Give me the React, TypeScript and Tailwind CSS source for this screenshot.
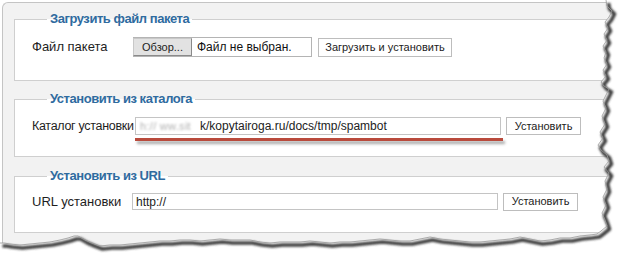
import React from "react";

const right: [number, number][] = [
  [606, 0], [607, 6], [612, 11], [609, 17], [605, 22], [608, 28], [604, 34], [607, 40],
  [603, 46], [606, 52], [604, 58], [607, 64], [603, 70], [606, 76], [601, 82], [604, 86],
  [609, 89], [606, 95], [603, 101], [606, 108], [602, 116], [605, 124], [600, 132],
  [603, 138], [598, 145], [601, 150], [607, 155], [609, 161], [604, 167], [609, 173],
  [605, 181], [607, 189], [603, 197], [606, 205], [602, 213], [605, 220], [607, 226],
  [601, 231], [597, 234],
];
const bottom: [number, number][] = [
  [590, 235], [580, 236], [570, 238], [560, 238], [550, 240], [540, 241], [530, 239],
  [520, 237], [510, 239], [500, 240], [490, 241], [480, 242], [470, 242], [460, 241],
  [450, 240], [440, 239], [430, 237], [420, 239], [410, 241], [400, 241], [390, 240],
  [380, 239], [370, 240], [360, 241], [350, 242], [340, 242], [330, 243], [320, 242],
  [310, 241], [300, 242], [290, 242], [280, 242], [270, 243], [260, 242], [250, 240],
  [240, 240], [230, 240], [220, 239], [210, 240], [200, 241], [190, 240], [180, 240],
  [170, 241], [160, 241], [150, 242], [140, 243], [130, 244], [120, 245], [110, 245],
  [100, 246], [92, 243], [85, 240], [78, 236], [74, 236], [68, 238], [60, 240],
  [50, 242], [40, 243], [30, 244], [20, 245], [10, 244], [4, 243], [0, 243],
];
const edge = [...right, ...bottom];
const edgeStr = edge.map((p) => p.join(",")).join(" ");
const fillStr = edgeStr + " 0,269 628,269 628,0";

function TornEdge() {
  return (
    <svg
      className="absolute left-0 top-0 pointer-events-none"
      width="628"
      height="269"
      viewBox="0 0 628 269"
    >
      <defs>
        <filter id="blr" x="-5%" y="-5%" width="110%" height="110%">
          <feGaussianBlur stdDeviation="0.9" />
        </filter>
      </defs>
      <polygon points={fillStr} fill="#ffffff" />
      <polyline
        points={edgeStr}
        transform="translate(2.5,3)"
        fill="none"
        stroke="#3f3f3f"
        strokeWidth="3.6"
        strokeLinejoin="round"
        filter="url(#blr)"
      />
      <polyline
        points={edgeStr}
        fill="none"
        stroke="#9a9a9a"
        strokeWidth="0.8"
      />
    </svg>
  );
}

const font = "font-['Liberation_Sans',Arial,sans-serif]";

function Legend({ children }: { children: React.ReactNode }) {
  return (
    <legend className="ml-[15px] px-[3px] text-[13px] leading-[16px] tracking-[-0.45px] font-bold text-[#2f6b9f]">
      {children}
    </legend>
  );
}

export default function App() {
  return (
    <div className={`relative w-[628px] h-[269px] overflow-hidden bg-white ${font}`}>
      <div className="absolute left-[2px] top-[2px] w-[640px] h-[260px] rounded-tl-[6px] border-t border-l border-[#c4c4c4] bg-[#f2f2f2]">
        {/* Fieldset 1 */}
        <fieldset className="mt-[8px] ml-[11px] mr-0 border border-[#cfcfcf] bg-white pl-[17px] pb-[23px]">
          <Legend>Загрузить файл пакета</Legend>
          <div className="mt-[10px] h-[20px] flex items-center">
            <div className="w-[101px] text-[13px] text-[#1e1e1e]">Файл пакета</div>
            <div className="w-[179px] h-[20px] flex items-stretch border-t border-b border-r border-[#b4b4b4] bg-white">
              <div className="w-[59px] flex items-center justify-center bg-[#e2e2e2] border border-[#8a8a8a] border-t-[#c8c8c8] border-l-[#c8c8c8] text-[11px] text-[#222]">
                Обзор...
              </div>
              <div className="flex items-center pl-[5px] text-[12px] text-[#111]">Файл не выбран.</div>
            </div>
            <div className="ml-[6px] w-[134px] h-[19px] flex items-center justify-center border border-[#bdbdbd] bg-white text-[11px] text-[#222]">
              Загрузить и установить
            </div>
          </div>
        </fieldset>

        {/* Fieldset 2 */}
        <fieldset className="mt-[10px] ml-[11px] border border-[#cfcfcf] bg-white pl-[17px] pb-[21px]">
          <Legend>Установить из каталога</Legend>
          <div className="mt-[10px] h-[18px] flex items-center">
            <div className="w-[103px] text-[12.5px] tracking-[-0.3px] text-[#1e1e1e] whitespace-nowrap">Каталог установки</div>
            <div className="relative w-[366px] h-[18px]">
              <div className="w-full h-full flex items-center border border-[#c4c4c4] bg-white pl-[4px] text-[12px] text-[#222] whitespace-nowrap overflow-hidden">
                <span className="w-[60px] shrink-0 blur-[1.1px] text-[11px] text-[#b0b0b0] tracking-[0.3px]">h:// ww.sit</span>
                <span>k/kopytairoga.ru/docs/tmp/spambot</span>
              </div>
              <div className="absolute left-0 top-[21px] w-[368px] h-[3px] bg-[#b94a3c] shadow-[2px_3px_3px_rgba(0,0,0,0.35)]" />
            </div>
            <div className="ml-[5px] w-[75px] h-[18px] flex items-center justify-center border border-[#bdbdbd] bg-white text-[11px] text-[#222]">
              Установить
            </div>
          </div>
        </fieldset>

        {/* Fieldset 3 */}
        <fieldset className="mt-[11px] ml-[11px] border border-[#cfcfcf] bg-white pl-[17px] pb-[22px]">
          <Legend>Установить из URL</Legend>
          <div className="mt-[9px] h-[17px] flex items-center">
            <div className="w-[100px] text-[13px] text-[#1e1e1e]">URL установки</div>
            <div className="w-[366px] h-[17px] flex items-center border border-[#c4c4c4] bg-white pl-[3px] text-[12px] text-[#222]">
              http://
            </div>
            <div className="ml-[5px] w-[75px] h-[18px] flex items-center justify-center border border-[#bdbdbd] bg-white text-[11px] text-[#222]">
              Установить
            </div>
          </div>
        </fieldset>
      </div>
      <TornEdge />
    </div>
  );
}
